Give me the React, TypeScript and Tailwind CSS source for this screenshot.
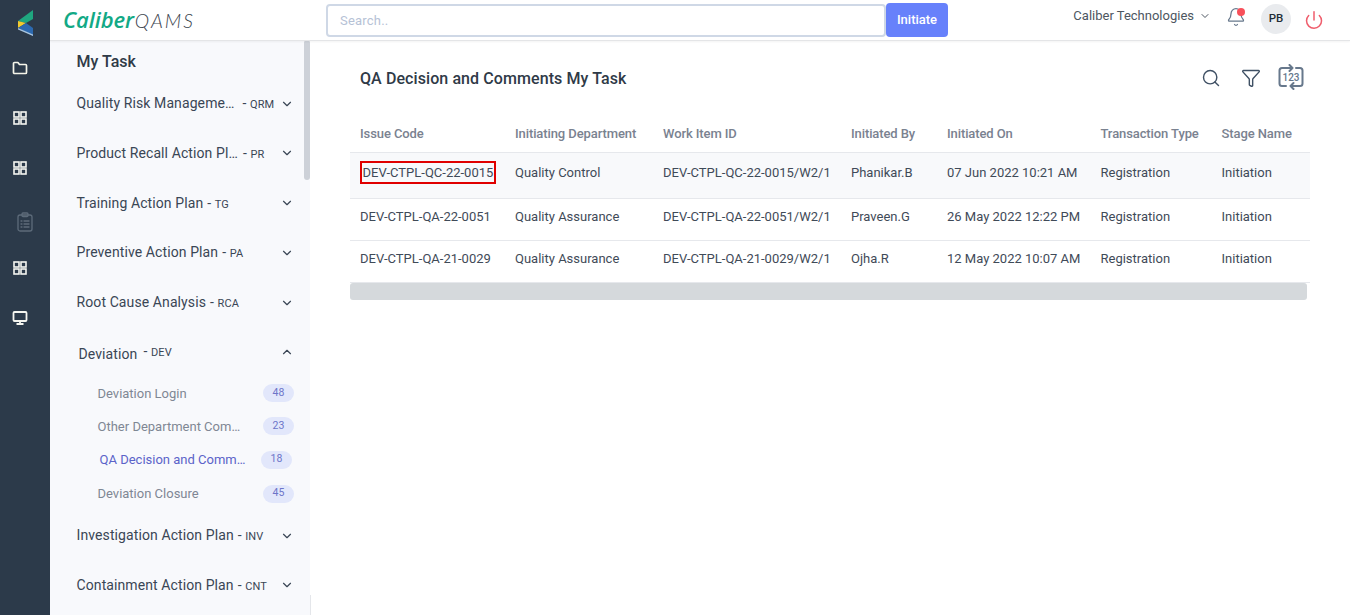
import { ChevronDown, ChevronUp, Bell, Power, Search, Funnel } from 'lucide-react';

const before = [
  { name: 'Quality Risk Manageme…', code: 'QRM', gap: 'ml-[8px]' },
  { name: 'Product Recall Action Pl…', code: 'PR', gap: 'ml-[5px]' },
  { name: 'Training Action Plan', code: 'TG', gap: 'ml-[4px]' },
  { name: 'Preventive Action Plan', code: 'PA', gap: 'ml-[4px]' },
  { name: 'Root Cause Analysis', code: 'RCA', gap: 'ml-[4px]' },
];

const after = [
  { name: 'Investigation Action Plan', code: 'INV', gap: 'ml-[4px]' },
  { name: 'Containment Action Plan', code: 'CNT', gap: 'ml-[4px]' },
];

const rows = [
  ['DEV-CTPL-QC-22-0015', 'Quality Control', 'DEV-CTPL-QC-22-0015/W2/1', 'Phanikar.B', '07 Jun 2022 10:21 AM', 'Registration', 'Initiation'],
  ['DEV-CTPL-QA-22-0051', 'Quality Assurance', 'DEV-CTPL-QA-22-0051/W2/1', 'Praveen.G', '26 May 2022 12:22 PM', 'Registration', 'Initiation'],
  ['DEV-CTPL-QA-21-0029', 'Quality Assurance', 'DEV-CTPL-QA-21-0029/W2/1', 'Ojha.R', '12 May 2022 10:07 AM', 'Registration', 'Initiation'],
];

const headers = ['Issue Code', 'Initiating Department', 'Work Item ID', 'Initiated By', 'Initiated On', 'Transaction Type', 'Stage Name'];
const widths = ['w-[155px]', 'w-[148px]', 'w-[188px]', 'w-[96px]', 'w-[153.5px]', 'w-[121px]', 'w-[98.5px]'];

const FolderIcon = () => (
  <svg width="16" height="16" viewBox="0 0 16 16" fill="none" stroke="#f5f5ea" strokeWidth="1.7" strokeLinejoin="round">
    <path d="M1.5 3.5a1 1 0 0 1 1-1h3.4l1.6 2h6a1 1 0 0 1 1 1v7a1 1 0 0 1-1 1h-11a1 1 0 0 1-1-1z" />
  </svg>
);

const GridIcon = () => (
  <svg width="16" height="16" viewBox="0 0 16 16" fill="none" stroke="#f5f5f0" strokeWidth="1.6">
    <rect x="2" y="2" width="5" height="5" />
    <rect x="9" y="2" width="5" height="5" />
    <rect x="2" y="9" width="5" height="5" />
    <rect x="9" y="9" width="5" height="5" />
  </svg>
);

const ClipboardIcon = () => (
  <svg width="16" height="20" viewBox="0 0 16 20" fill="none" stroke="#5d6b7a" strokeWidth="1.3" strokeLinecap="round">
    <rect x="1" y="3" width="14" height="16" rx="2" />
    <rect x="5" y="1" width="6" height="3.5" rx="1" />
    <path d="M4 9h1M7 9h5M4 12h1M7 12h5M4 15h1M7 15h5" />
  </svg>
);

const MonitorIcon = () => (
  <svg width="16" height="16" viewBox="0 0 16 16" fill="none" stroke="#f5f5f0" strokeWidth="1.8">
    <rect x="1.5" y="2" width="13" height="9" rx="1" />
    <path d="M8 11v3M4.5 14h7" />
  </svg>
);

// coordinates follow the mark in the reference: 15 wide, 26 tall
const Logo = () => (
  <svg width="15" height="26" viewBox="0 0 15 26">
    <path d="M15 0v9l-7 4-8-2z" fill="#1fa67f" />
    <path d="M0 11l8 2-8 5z" fill="#f2cb2e" />
    <path d="M0 18l8-5 7 5v8z" fill="#2c69b0" />
    <path d="M0 18v1.4L15 26v-1.6z" fill="#a9c4de" />
  </svg>
);

const RepeatIcon = () => (
  <svg width="26" height="26" viewBox="0 0 26 26" fill="none" stroke="#67788c" strokeWidth="2" strokeLinecap="round" strokeLinejoin="round">
    <path d="M14 4H4a2.5 2.5 0 0 0-2.5 2.5v13A2.5 2.5 0 0 0 4 22h4" />
    <path d="M13 22h9a2.5 2.5 0 0 0 2.5-2.5v-13A2.5 2.5 0 0 0 22 4h-4" />
    <path d="M11.5 1l3 3-3 3M15.5 19l-3 3 3 3" />
  </svg>
);

const MenuItem = ({ name, code, gap }: { name: string; code: string; gap: string }) => (
  <div className="h-[49.75px] flex items-center pl-[26.5px] pr-[16px] text-[14px] text-[#3a4655] tracking-[0.1px]">
    <span className="whitespace-nowrap">{name}</span>
    <span className={`${gap} whitespace-nowrap`}>- <span className="text-[11px]">{code}</span></span>
    <ChevronDown className="ml-auto w-[14px] h-[14px]" strokeWidth={2} />
  </div>
);

const SubItem = ({ label, count, active, height }: { label: string; count: number; active?: boolean; height: string }) => (
  <div className={`${height} flex items-center ${active ? 'pl-[49.5px] pr-[18px] text-[#5b63c9]' : 'pl-[47.5px] pr-[16px] text-[#7f8794]'} text-[13px]`}>
    <span className="whitespace-nowrap">{label}</span>
    <span className="ml-auto w-[31px] h-[18px] pb-[1px] rounded-full bg-[#e2e7fb] text-[#6d75c9] text-[10.5px] flex items-center justify-center">{count}</span>
  </div>
);

export default function App() {
  return (
    <div className="w-[1350px] h-[615px] overflow-hidden flex bg-white font-['Roboto',sans-serif]">
      {/* icon rail */}
      <div className="w-[50px] shrink-0 bg-[#2c3a4a] flex flex-col items-center">
        <div className="mt-[10px] h-[26px]"><Logo /></div>
        <div className="mt-[24px] -ml-[10px]"><FolderIcon /></div>
        <div className="mt-[34px] -ml-[10px]"><GridIcon /></div>
        <div className="mt-[34px] -ml-[10px]"><GridIcon /></div>
        <div className="mt-[36px]"><ClipboardIcon /></div>
        <div className="mt-[28px] -ml-[10px]"><GridIcon /></div>
        <div className="mt-[34px] -ml-[10px]"><MonitorIcon /></div>
      </div>

      <div className="flex-1 flex flex-col min-w-0">
        {/* header */}
        <div className="h-[41px] shrink-0 flex items-center border-b border-[#e4e5e7] shadow-[0_1px_2px_rgba(0,0,0,0.05)] relative z-10 bg-white">
          <div className="w-[276px] pl-[13px] shrink-0 flex items-baseline italic leading-none -mt-[1px]">
            <span className="text-[22px] font-semibold text-[#12a985] font-['Open_Sans',sans-serif] tracking-[-0.1px]">Caliber</span>
            <span className="ml-[1px] text-[19.5px] font-light text-[#3d4650] font-['Lato',sans-serif] tracking-[2px]">QAMS</span>
          </div>
          <div className="w-[560px] h-[33px] rounded-[4px] border-2 border-[#cfd8e6] flex items-center pl-[12px] pt-[1px] text-[13px] text-[#b6c2d6] tracking-[0.2px]">Search..</div>
          <div className="w-[62px] h-[34px] mt-[-1px] rounded-[4px] bg-[#6781fb] text-white text-[13px] font-medium flex items-center justify-center">Initiate</div>
          <div className="ml-auto flex items-center h-full">
            <span className="text-[13px] text-[#4d5661] -mt-[9px]">Caliber Technologies</span>
            <ChevronDown className="w-[12px] h-[12px] ml-[5px] text-[#4d5661] -mt-[9px]" strokeWidth={2} />
            <div className="relative ml-[15px] -mt-[7px]">
              <Bell className="w-[20px] h-[20px] text-[#67788c]" strokeWidth={1.5} />
              <span className="absolute top-[1px] right-[1px] w-[8px] h-[8px] rounded-full bg-[#f8505a]" />
            </div>
            <div className="ml-[15px] w-[30px] h-[30px] rounded-full bg-[#e9ebee] text-[#222b36] text-[11.5px] font-medium flex items-center justify-center -mt-[3px]">PB</div>
            <Power className="ml-[13px] mr-[26px] w-[20px] h-[20px] text-[#ef5d6c] -mt-[1px]" strokeWidth={1.8} />
          </div>
        </div>

        <div className="flex-1 flex min-h-0">
          {/* task sidebar */}
          <div className="w-[261px] shrink-0 relative">
            <div className="w-[260px] h-[574px] bg-[#f8f9fc] overflow-hidden">
              <div className="h-[37.75px] pl-[26.5px] pb-[4.75px] flex items-end text-[16px] font-medium text-[#2f3a47] leading-[24px]">My Task</div>
              {before.map((m) => <MenuItem key={m.code} {...m} />)}
              <div className="h-[49.25px] flex items-center pl-[28.5px] pr-[16px] text-[14px] text-[#3a4655] tracking-[0.1px]">
                <span className="mt-[4px]">Deviation</span>
                <span className="ml-[6px] -mt-[1px] whitespace-nowrap">- <span className="text-[11px]">DEV</span></span>
                <ChevronUp className="ml-auto w-[14px] h-[14px]" strokeWidth={2} />
              </div>
              <SubItem label="Deviation Login" count={48} height="h-[33px]" />
              <SubItem label="Other Department Com…" count={23} height="h-[33px]" />
              <SubItem label="QA Decision and Comm…" count={18} active height="h-[34px]" />
              <SubItem label="Deviation Closure" count={45} height="h-[34px]" />
              {after.map((m) => <MenuItem key={m.code} {...m} />)}
            </div>
            <div className="absolute right-[1px] -top-[1px] w-[6px] h-[140px] rounded-[3px] bg-[#cdd1d8]" />
            <div className="absolute right-0 bottom-0 w-[1px] h-[20px] bg-[#e4e6ea]" />
          </div>

          {/* main content */}
          <div className="flex-1 min-w-0 pl-[39px] pr-[40px]">
            <div className="h-[70px] flex items-center pl-[10px] pr-[6px] pt-[5px]">
              <h1 className="text-[16px] font-medium text-[#2f3a47] tracking-[0.09px]">QA Decision and Comments My Task</h1>
              <div className="ml-auto flex items-center text-[#3f5064] -mt-[2px]">
                <Search className="w-[20px] h-[20px]" strokeWidth={1.7} />
                <Funnel className="ml-[20px] w-[20px] h-[20px]" strokeWidth={1.7} />
                <div className="relative ml-[17px] w-[26px] h-[26px] -mt-[1px]">
                  <RepeatIcon />
                  <span className="absolute inset-0 flex items-center justify-center text-[10px] font-medium text-[#67788c]">123</span>
                </div>
              </div>
            </div>
            <table className="w-[960px] table-fixed border-collapse text-[13px] text-[#3f4a58]">
              <thead>
                <tr className="h-[41px] border-b border-[#e6e8ec]">
                  {headers.map((h, i) => (
                    <th key={h} className={`${widths[i]} px-[10px] pt-[4px] text-left font-medium text-[#7a8290] whitespace-nowrap tracking-[-0.1px]`}>{h}</th>
                  ))}
                </tr>
              </thead>
              <tbody>
                {rows.map((r, ri) => (
                  <tr key={r[0]} className={`${ri === 0 ? 'h-[46px] bg-[#f8f9fb]' : 'h-[42px]'} border-b border-[#e6e8ec]`}>
                    {r.map((c, i) => (
                      <td key={i} className={`px-[10px] ${ri === 0 && i === 0 ? 'pb-[6px]' : 'pb-[4px]'} whitespace-nowrap`}>
                        {ri === 0 && i === 0 ? (
                          <span className="inline-block px-[0.5px] border-2 border-[#e00000] leading-[19px]">{c}</span>
                        ) : c}
                      </td>
                    ))}
                  </tr>
                ))}
              </tbody>
            </table>
            <div className="w-[957px] h-[17px] rounded-[3px] bg-[#d5d9dc]" />
          </div>
        </div>
      </div>
    </div>
  );
}
